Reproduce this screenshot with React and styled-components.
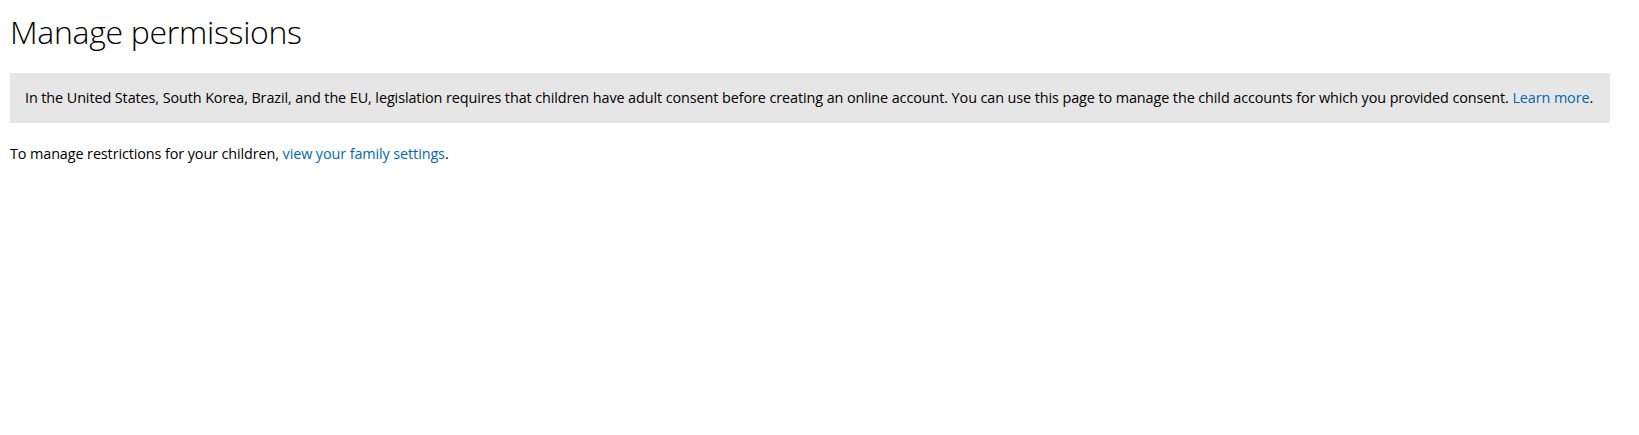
import React from "react";
import styled, { createGlobalStyle } from "styled-components";

const Global = createGlobalStyle`
  body {
    margin: 0;
    background: #fff;
    font-family: "Open Sans", "Noto Sans", sans-serif;
    color: #000;
  }
`;

const Page = styled.div`
  padding: 10px 29px 0 10px;
  display: flex;
  flex-direction: column;
`;

const Title = styled.h1`
  margin: 0;
  font-family: "Open Sans", sans-serif;
  font-weight: 300;
  font-size: 32px;
  line-height: 44px;
  letter-spacing: -0.3px;
`;

const Notice = styled.div`
  margin-top: 19px;
  background: #e6e6e6;
  padding: 14px 15px;
  font-size: 14.4px;
  line-height: 22px;
  letter-spacing: -0.09px;
`;

const Text = styled.p`
  margin: 20px 0 0;
  font-size: 14.4px;
  line-height: 22px;
  letter-spacing: -0.1px;
`;

const Link = styled.a`
  color: #0067b8;
  text-decoration: none;
  cursor: pointer;
`;

export default function App() {
  return (
    <>
      <Global />
      <Page>
        <Title>Manage permissions</Title>
        <Notice>
          In the United States, South Korea, Brazil, and the EU, legislation
          requires that children have adult consent before creating an online
          account. You can use this page to manage the child accounts for which
          you provided consent. <Link>Learn more</Link>.
        </Notice>
        <Text>
          To manage restrictions for your children,{" "}
          <Link>view your family settings</Link>.
        </Text>
      </Page>
    </>
  );
}
